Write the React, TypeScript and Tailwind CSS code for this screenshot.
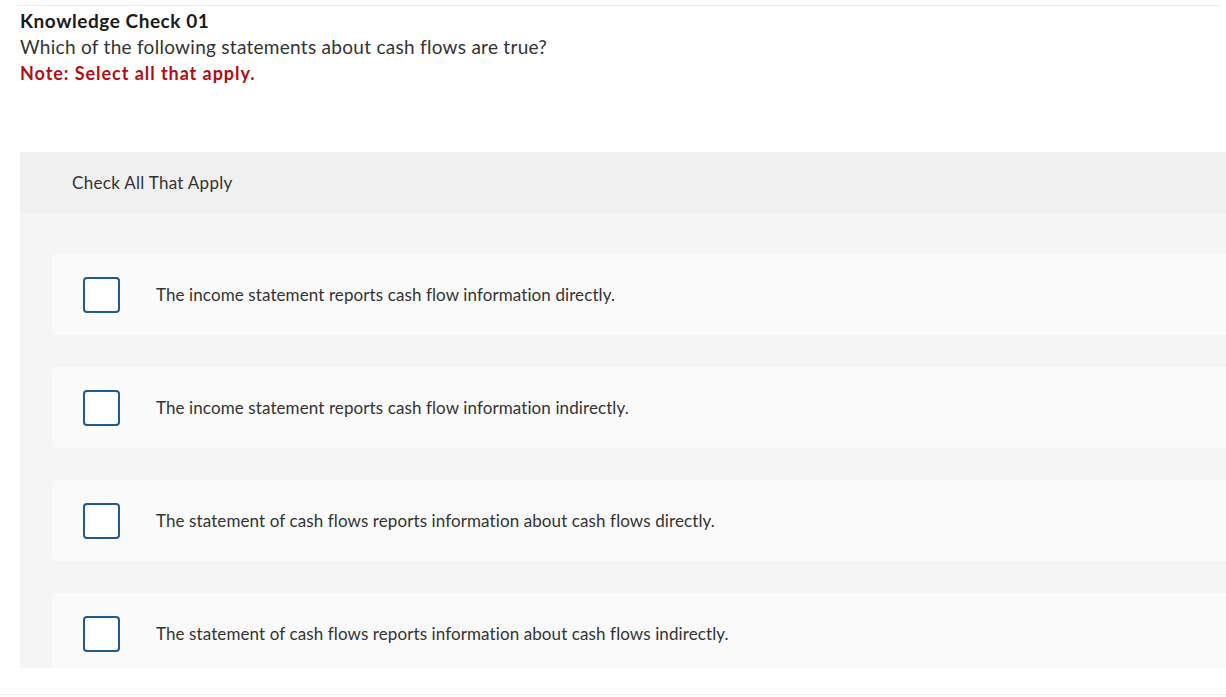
import React from "react";

const options = [
  "The income statement reports cash flow information directly.",
  "The income statement reports cash flow information indirectly.",
  "The statement of cash flows reports information about cash flows directly.",
  "The statement of cash flows reports information about cash flows indirectly.",
];

export default function App() {
  return (
    <div
      className="w-[1226px] h-[697px] overflow-hidden bg-white text-[#2d2d2d]"
      style={{ fontFamily: "Lato, 'Open Sans', Arial, sans-serif" }}
    >
      <div className="h-[5px]" />
      <div className="ml-[17px] mr-[6px] border-t border-[#ebebeb]" />
      <div className="pl-[20px] pt-[2px]">
        <div className="text-[19px] leading-[26px] font-bold tracking-[0.55px] text-[#1a1a1a]">Knowledge Check 01</div>
        <div className="text-[19px] leading-[26px] tracking-[0.28px] text-[#333]">
          Which of the following statements about cash flows are true?
        </div>
        <div className="text-[18px] leading-[26px] font-bold tracking-[0.95px] text-[#b00e12]">Note: Select all that apply.</div>
      </div>
      <div className="ml-[20px] mt-[66px] h-[516px] overflow-hidden">
        <div className="h-[61px] bg-[#f0f0f0] flex items-center pl-[52px] text-[17px] tracking-[0.3px] text-[#333]">
          Check All That Apply
        </div>
        <div className="h-[455px] bg-[#f5f5f5] pt-[41px] pl-[32px] flex flex-col gap-[32px] overflow-hidden">
          {options.map((o) => (
            <div key={o} className="h-[81px] shrink-0 bg-[#fafafa] flex items-center rounded-l-[4px]">
              <div className="ml-[31px] w-[37px] h-[36px] shrink-0 rounded-[4px] border-2 border-[#215b8e] bg-white" />
              <div className="ml-[36px] text-[17px] tracking-[0.1px] text-[#333]">{o}</div>
            </div>
          ))}
        </div>
      </div>
      <div className="mt-[26px] border-t border-[#ededed]" />
    </div>
  );
}
